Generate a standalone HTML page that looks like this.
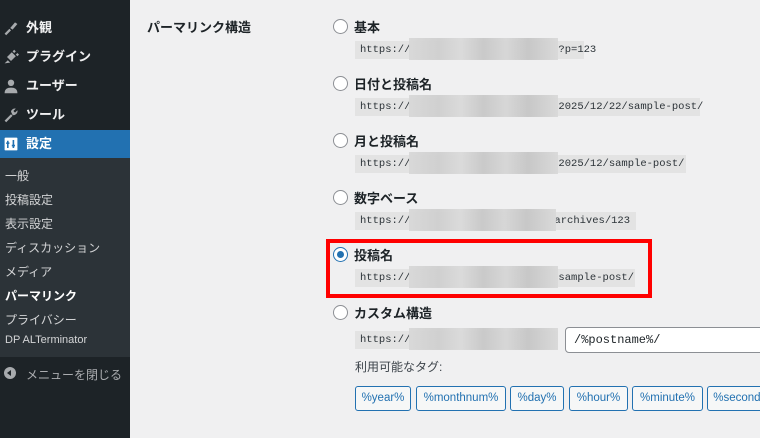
<!DOCTYPE html>
<html><head><meta charset="utf-8"><style>
*{margin:0;padding:0;box-sizing:border-box}
body{width:760px;height:438px;overflow:hidden;background:#f0f0f1;font-family:"Liberation Sans","Noto Sans CJK JP",sans-serif;position:relative;color:#1d2327}
#sb{position:absolute;left:0;top:0;width:130px;height:438px;background:#1d2327}
.mi{position:absolute;left:0;width:130px;height:28px;color:#f0f0f1;font-size:13px;font-weight:bold;line-height:28px;padding-left:26px}
.ic{position:absolute;left:3px;top:6px;width:16px;height:16px;fill:#a7aaad}
#sub{position:absolute;left:0;top:158px;width:130px;height:199px;background:#2c3338}
.si{position:absolute;left:5px;font-size:12px;color:#f0f0f1;opacity:.85;white-space:nowrap}
.a{position:absolute}
.lbl{position:absolute;left:354px;font-size:13px;font-weight:bold}
.rd{position:absolute;left:333px;width:15px;height:15px;border:1px solid #8c8f94;border-radius:50%;background:#fff}
.code{position:absolute;left:355px;height:18px;background:#e3e3e3;font-family:"Liberation Mono",monospace;font-size:10.5px;line-height:18px;padding-left:5px;color:#2c3338;white-space:nowrap}
.blur{position:absolute;left:409px;height:22px;background:linear-gradient(90deg,#d8d8d8,#cfcfcf 20%,#dadada 35%,#c8c8c8 50%,#d6d6d6 65%,#c6c6c6 80%,#d9d9d9);opacity:.95}
.btn{position:absolute;top:386px;height:25px;border:1px solid #2271b1;border-radius:3px;background:#f6f7f7;color:#2271b1;font-size:11.5px;line-height:23px;text-align:center;white-space:nowrap;overflow:hidden}
</style></head><body>
<div id="sb">
<div class="mi" style="top:14px"><svg class="ic" viewBox="0 0 20 20"><path d="M2 17l6-6 2 2-6 6zM9 10l6-7 3 2-6 7z"/></svg>外観</div>
<div class="mi" style="top:43px"><svg class="ic" viewBox="0 0 20 20"><path d="M2 18l4-4 3 3zM5 10l6-6 5 5-6 6zM12 3l2-2 2 2-2 2zM16 7l2-2 2 2-2 2z"/></svg>プラグイン</div>
<div class="mi" style="top:72px"><svg class="ic" viewBox="0 0 20 20"><circle cx="10" cy="6" r="4"/><path d="M2 19c0-5 3-7 8-7s8 2 8 7z"/></svg>ユーザー</div>
<div class="mi" style="top:101px"><svg class="ic" viewBox="0 0 20 20"><path d="M2 17l8-8 2 2-8 8zM10 6a5 5 0 016-4l-3 3 2 2 3-3a5 5 0 01-6 6z"/></svg>ツール</div>
<div class="mi" style="top:130px;background:#2271b1;color:#fff"><svg class="ic" viewBox="0 0 20 20" style="fill:#fff"><rect x="2" y="2" width="16" height="16" rx="1"/><path d="M6 6v9M13 5v10M4 9h4M11 12h4" stroke="#2271b1" stroke-width="2"/></svg>設定</div>
<div class="a" style="left:122px;top:136px;width:0;height:0;border:8px solid transparent;border-right-color:#f0f0f1"></div>
<div id="sub"></div>
<div class="si" style="top:167px">一般</div>
<div class="si" style="top:191px">投稿設定</div>
<div class="si" style="top:215px">表示設定</div>
<div class="si" style="top:239px">ディスカッション</div>
<div class="si" style="top:263px">メディア</div>
<div class="si" style="top:287px;font-weight:bold;opacity:1;color:#fff">パーマリンク</div>
<div class="si" style="top:311px">プライバシー</div>
<div class="si" style="top:334px;font-size:11px">DP ALTerminator</div>
<div class="a" style="left:4px;top:367px;width:12px;height:12px;border-radius:50%;background:#a7aaad"></div>
<div class="a" style="left:7px;top:370px;width:0;height:0;border-top:3px solid transparent;border-bottom:3px solid transparent;border-right:4px solid #1d2327"></div>
<div class="si" style="top:366px;left:26px;color:#c3c4c7">メニューを閉じる</div>
</div>

<div class="a" style="left:147px;top:17px;font-size:13px;font-weight:bold">パーマリンク構造</div>

<div class="rd" style="top:19px"></div><div class="lbl" style="top:17px">基本</div>
<div class="code" style="top:41px;width:229px">https://<span style="margin-left:148px">?p=123</span></div><div class="blur" style="top:38px;width:149px"></div>

<div class="rd" style="top:76px"></div><div class="lbl" style="top:74px">日付と投稿名</div>
<div class="code" style="top:98px;width:345px">https://<span style="margin-left:148px">2025/12/22/sample-post/</span></div><div class="blur" style="top:95px;width:149px"></div>

<div class="rd" style="top:133px"></div><div class="lbl" style="top:131px">月と投稿名</div>
<div class="code" style="top:155px;width:331px">https://<span style="margin-left:148px">2025/12/sample-post/</span></div><div class="blur" style="top:152px;width:149px"></div>

<div class="rd" style="top:190px"></div><div class="lbl" style="top:188px">数字ベース</div>
<div class="code" style="top:212px;width:281px">https://<span style="margin-left:144px">archives/123</span></div><div class="blur" style="top:209px;width:147px"></div>

<div class="rd" style="top:247px;border-color:#2271b1"><div class="a" style="left:3px;top:3px;width:7px;height:7px;border-radius:50%;background:#2271b1"></div></div><div class="lbl" style="top:245px">投稿名</div>
<div class="code" style="top:269px;width:280px">https://<span style="margin-left:148px">sample-post/</span></div><div class="blur" style="top:266px;width:149px"></div>
<div class="a" style="left:326px;top:239px;width:326px;height:59px;border:4px solid #f00"></div>

<div class="rd" style="top:305px"></div><div class="lbl" style="top:303px">カスタム構造</div>
<div class="code" style="top:331px;width:203px">https://</div><div class="blur" style="top:328px;width:149px"></div>
<div class="a" style="left:565px;top:327px;width:200px;height:26px;border:1px solid #8c8f94;border-radius:4px;background:#fff;font-family:'Liberation Mono',monospace;font-size:12px;line-height:24px;padding-left:8px">/%postname%/</div>
<div class="a" style="left:355px;top:358px;font-size:12px;color:#3c434a">利用可能なタグ:</div>

<div class="btn" style="left:355px;width:56px">%year%</div>
<div class="btn" style="left:416px;width:90px">%monthnum%</div>
<div class="btn" style="left:510px;width:54px">%day%</div>
<div class="btn" style="left:569px;width:59px">%hour%</div>
<div class="btn" style="left:632px;width:71px">%minute%</div>
<div class="btn" style="left:707px;width:70px">%second%</div>
</body></html>
